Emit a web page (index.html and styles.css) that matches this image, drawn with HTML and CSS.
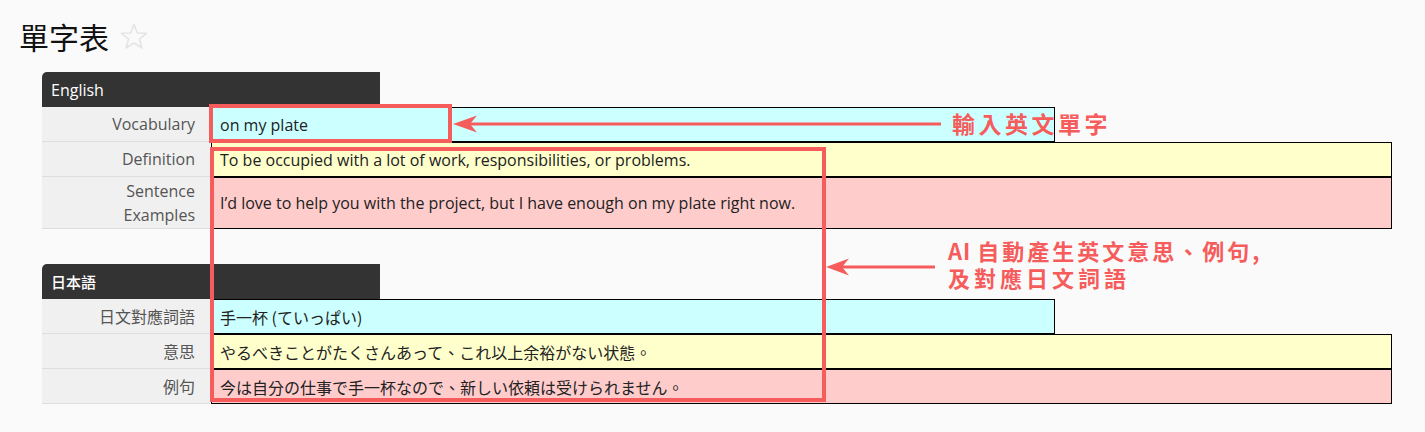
FILE: index.html
```html
<!DOCTYPE html>
<html lang="zh-Hant">
<head>
<meta charset="utf-8">
<title>單字表</title>
<link rel="stylesheet" href="styles.css">
</head>
<body>
<div class="page">
  <header class="page-head">
    <h1 class="page-title">單字表</h1>
    <svg class="star" width="28" height="27" viewBox="0 0 28 27" aria-hidden="true">
      <polygon points="14,1.5 17.4,10 26.5,10.3 19.4,16 21.9,25 14,19.8 6.1,25 8.6,16 1.5,10.3 10.6,10" fill="none" stroke="#e4e4e4" stroke-width="1.6" stroke-linejoin="round"/>
    </svg>
  </header>

  <section class="group">
    <div class="group-title">English</div>
    <div class="row">
      <div class="label">Vocabulary</div>
      <div class="field field-short cyan">on my plate</div>
    </div>
    <div class="row">
      <div class="label">Definition</div>
      <div class="field yellow">To be occupied with a lot of work, responsibilities, or problems.</div>
    </div>
    <div class="row row-tall">
      <div class="label label-multi">Sentence<br>Examples</div>
      <div class="field pink">I’d love to help you with the project, but I have enough on my plate right now.</div>
    </div>
  </section>

  <section class="group group-jp">
    <div class="group-title jp">日本語</div>
    <div class="row">
      <div class="label">日文對應詞語</div>
      <div class="field field-short cyan jp">手一杯 (ていっぱい)</div>
    </div>
    <div class="row">
      <div class="label">意思</div>
      <div class="field yellow jp">やるべきことがたくさんあって、これ以上余裕がない状態。</div>
    </div>
    <div class="row">
      <div class="label">例句</div>
      <div class="field pink jp">今は自分の仕事で手一杯なので、新しい依頼は受けられません。</div>
    </div>
  </section>

  <div class="annotations">
    <svg class="anno-svg" width="1425" height="432" viewBox="0 0 1425 432" aria-hidden="true">
      <rect x="211" y="106" width="239" height="35" fill="none" stroke="#f65c5c" stroke-width="4"/>
      <line x1="468" y1="124" x2="941" y2="124" stroke="#f65c5c" stroke-width="3"/>
      <polygon points="453,124 477,115.5 470,124 477,132.5" fill="#f65c5c"/>
      <rect x="212" y="149" width="612" height="251" fill="none" stroke="#f65c5c" stroke-width="4"/>
      <line x1="840" y1="267" x2="935" y2="267" stroke="#f65c5c" stroke-width="3"/>
      <polygon points="826,267 849,258.5 842,267 849,275.5" fill="#f65c5c"/>
    </svg>
    <div class="anno-text anno-1">輸入英文單字</div>
    <div class="anno-text anno-2">
      <div class="anno-line anno-line-1"><span class="anno-ai">AI </span>自動產生英文意思、例句,</div>
      <div class="anno-line">及對應日文詞語</div>
    </div>
  </div>
</div>
</body>
</html>
```

FILE: styles.css
```css
html, body {
  margin: 0;
  padding: 0;
  background: #fafafa;
}

body {
  font-family: "Open Sans", "Noto Sans CJK TC", sans-serif;
  color: #222;
  width: 1425px;
  height: 432px;
  overflow: hidden;
}

.page {
  position: relative;
  width: 1425px;
  height: 432px;
}

.page-head {
  display: flex;
  align-items: center;
  gap: 11px;
  padding: 12px 0 0 19px;
  height: 60px;
  box-sizing: border-box;
}

.page-title {
  margin: 0;
  font-family: "Noto Sans CJK TC", sans-serif;
  font-size: 30px;
  font-weight: 400;
  line-height: 42px;
  color: #111;
}

.star {
  display: block;
  margin-top: 1px;
}

.group {
  margin: 12px 0 0 42px;
}

.group-jp {
  margin-top: 35px;
}

.group-title {
  width: 338px;
  height: 35px;
  box-sizing: border-box;
  background: #333333;
  color: #fff;
  border-top-left-radius: 5px;
  font-size: 16px;
  font-weight: 400;
  padding-left: 9px;
  display: flex;
  align-items: center;
}

.group-title.jp {
  font-family: "Noto Sans CJK TC", sans-serif;
  font-weight: 500;
  font-size: 15px;
}

.row {
  display: grid;
  grid-template-columns: 168px auto;
  column-gap: 1px;
  height: 35px;
  align-items: stretch;
  justify-content: start;
}

.row-tall {
  height: 52px;
}

.label {
  background: #f0f0f0;
  border-bottom: 1px solid #dedede;
  box-sizing: border-box;
  color: #555;
  font-size: 16px;
  text-align: right;
  padding-right: 15px;
  display: flex;
  align-items: center;
  justify-content: flex-end;
}

.label-multi {
  line-height: 24px;
  padding-top: 1px;
}

.field {
  width: 1181px;
  box-sizing: border-box;
  border: 1px solid #000;
  padding: 0 8px;
  font-size: 16px;
  color: #222;
  display: flex;
  align-items: center;
}

.field-short {
  width: 844px;
}

.field.jp {
  font-family: "Noto Sans CJK JP", sans-serif;
  font-size: 16px;
}

.cyan { background: #ccffff; }
.yellow { background: #ffffcc; }
.pink { background: #ffcccc; }

.annotations {
  position: absolute;
  left: 0;
  top: 0;
  width: 1425px;
  height: 432px;
  pointer-events: none;
}

.anno-svg {
  position: absolute;
  left: 0;
  top: 0;
}

.anno-text {
  position: absolute;
  color: #f65c5c;
  font-family: "Noto Sans CJK TC", sans-serif;
  font-weight: 700;
  white-space: nowrap;
}

.anno-1 {
  left: 952px;
  top: 108px;
  font-size: 23px;
  line-height: 30px;
  letter-spacing: 3.5px;
}

.anno-2 {
  left: 948px;
  top: 237px;
  font-size: 22px;
  display: flex;
  flex-direction: column;
}

.anno-line {
  height: 27px;
  line-height: 27px;
  letter-spacing: 4px;
}

.anno-line-1 {
  letter-spacing: 3px;
}

.anno-ai {
  letter-spacing: 1px;
}
```
